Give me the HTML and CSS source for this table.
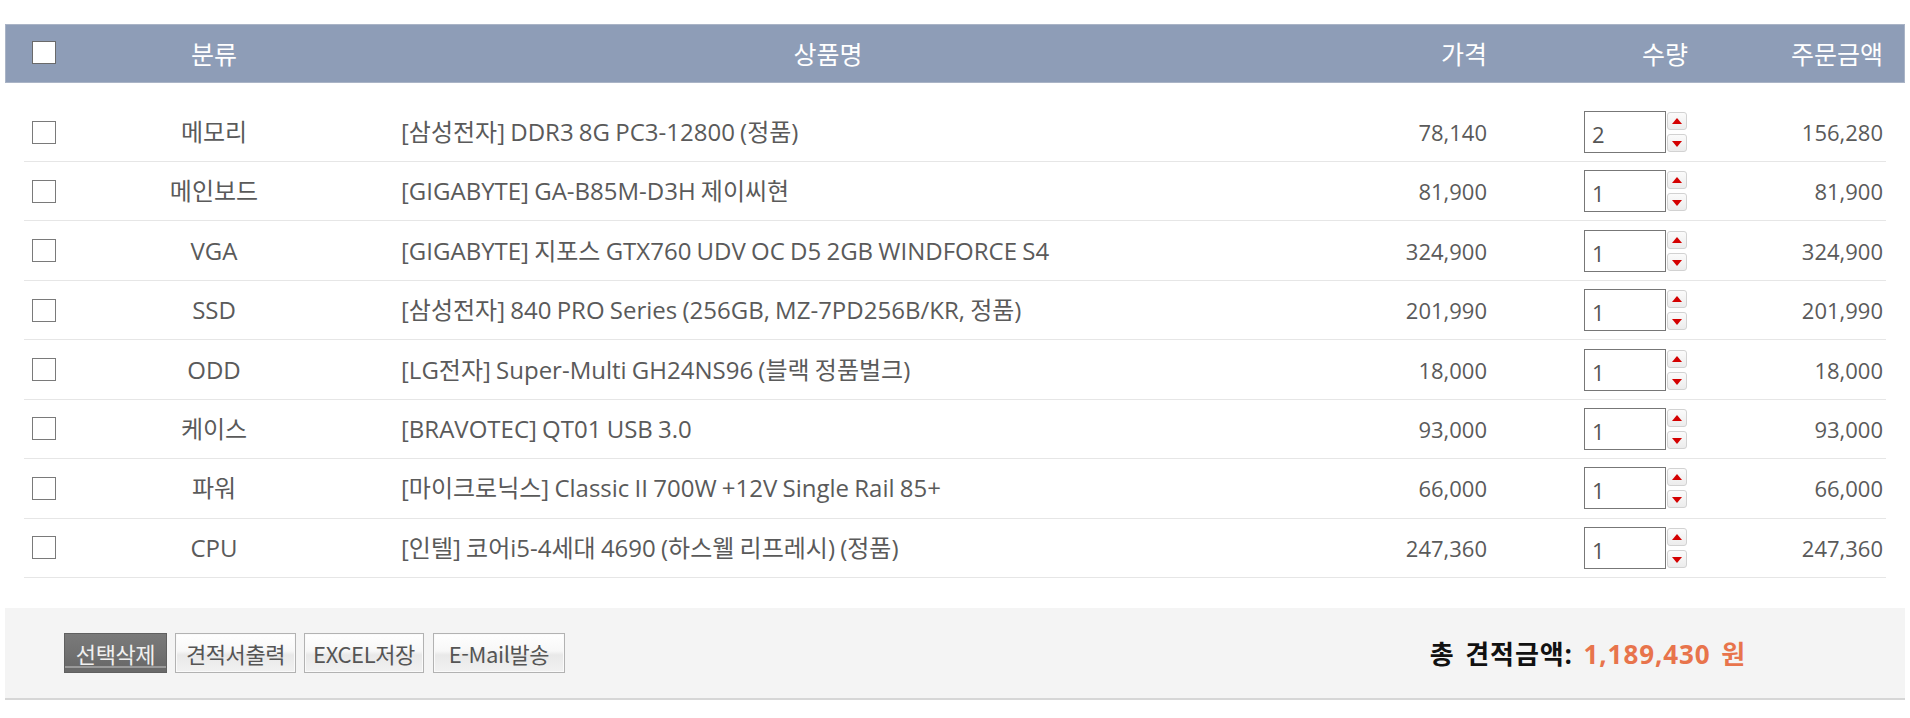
FILE: index.html
```html
<!DOCTYPE html>
<html lang="ko">
<head>
<meta charset="utf-8">
<title>견적</title>
<link rel="stylesheet" href="styles.css">
</head>
<body>
<div class="wrap">
  <div class="thead">
    <div class="grid">
      <div class="c-chk"><span class="chk chk-head"></span></div>
      <div class="c-cat">분류</div>
      <div class="c-name h-name">상품명</div>
      <div class="c-price">가격</div>
      <div class="c-qty h-qty">수량</div>
      <div class="c-sum">주문금액</div>
    </div>
  </div>

  <div class="tbody">
    <div class="grid row">
      <div class="c-chk"><span class="chk"></span></div>
      <div class="c-cat">메모리</div>
      <div class="c-name">[삼성전자] DDR3 8G PC3-12800 (정품)</div>
      <div class="c-price">78,140</div>
      <div class="c-qty"><span class="qbox">2</span><span class="spin"><span class="sbtn up"></span><span class="sbtn down"></span></span></div>
      <div class="c-sum">156,280</div>
    </div>
    <div class="grid row">
      <div class="c-chk"><span class="chk"></span></div>
      <div class="c-cat">메인보드</div>
      <div class="c-name">[GIGABYTE] GA-B85M-D3H 제이씨현</div>
      <div class="c-price">81,900</div>
      <div class="c-qty"><span class="qbox">1</span><span class="spin"><span class="sbtn up"></span><span class="sbtn down"></span></span></div>
      <div class="c-sum">81,900</div>
    </div>
    <div class="grid row">
      <div class="c-chk"><span class="chk"></span></div>
      <div class="c-cat">VGA</div>
      <div class="c-name">[GIGABYTE] 지포스 GTX760 UDV OC D5 2GB WINDFORCE S4</div>
      <div class="c-price">324,900</div>
      <div class="c-qty"><span class="qbox">1</span><span class="spin"><span class="sbtn up"></span><span class="sbtn down"></span></span></div>
      <div class="c-sum">324,900</div>
    </div>
    <div class="grid row">
      <div class="c-chk"><span class="chk"></span></div>
      <div class="c-cat">SSD</div>
      <div class="c-name">[삼성전자] 840 PRO Series (256GB, MZ-7PD256B/KR, 정품)</div>
      <div class="c-price">201,990</div>
      <div class="c-qty"><span class="qbox">1</span><span class="spin"><span class="sbtn up"></span><span class="sbtn down"></span></span></div>
      <div class="c-sum">201,990</div>
    </div>
    <div class="grid row">
      <div class="c-chk"><span class="chk"></span></div>
      <div class="c-cat">ODD</div>
      <div class="c-name">[LG전자] Super-Multi GH24NS96 (블랙 정품벌크)</div>
      <div class="c-price">18,000</div>
      <div class="c-qty"><span class="qbox">1</span><span class="spin"><span class="sbtn up"></span><span class="sbtn down"></span></span></div>
      <div class="c-sum">18,000</div>
    </div>
    <div class="grid row">
      <div class="c-chk"><span class="chk"></span></div>
      <div class="c-cat">케이스</div>
      <div class="c-name">[BRAVOTEC] QT01 USB 3.0</div>
      <div class="c-price">93,000</div>
      <div class="c-qty"><span class="qbox">1</span><span class="spin"><span class="sbtn up"></span><span class="sbtn down"></span></span></div>
      <div class="c-sum">93,000</div>
    </div>
    <div class="grid row">
      <div class="c-chk"><span class="chk"></span></div>
      <div class="c-cat">파워</div>
      <div class="c-name">[마이크로닉스] Classic II 700W +12V Single Rail 85+</div>
      <div class="c-price">66,000</div>
      <div class="c-qty"><span class="qbox">1</span><span class="spin"><span class="sbtn up"></span><span class="sbtn down"></span></span></div>
      <div class="c-sum">66,000</div>
    </div>
    <div class="grid row">
      <div class="c-chk"><span class="chk"></span></div>
      <div class="c-cat">CPU</div>
      <div class="c-name">[인텔] 코어i5-4세대 4690 (하스웰 리프레시) (정품)</div>
      <div class="c-price">247,360</div>
      <div class="c-qty"><span class="qbox">1</span><span class="spin"><span class="sbtn up"></span><span class="sbtn down"></span></span></div>
      <div class="c-sum">247,360</div>
    </div>
  </div>

  <div class="tfoot">
    <div class="btns">
      <span class="btn btn-dark">선택삭제</span>
      <span class="btn w2">견적서출력</span>
      <span class="btn w3">EXCEL저장</span>
      <span class="btn w4">E-Mail발송</span>
    </div>
    <div class="total">총 견적금액: <span class="amt">1,189,430 원</span></div>
  </div>
</div>
</body>
</html>
```

FILE: styles.css
```css
* { box-sizing: border-box; }
html, body { margin: 0; padding: 0; background: #fff; }
body {
  font-family: "Open Sans", "Noto Sans CJK KR", sans-serif;
  color: #5a5a5a;
  font-size: 24px;
}
.wrap {
  margin: 24px 5px 0 5px;
}
.grid {
  display: grid;
  grid-template-columns: 40px 300px 928px 195px 253px 146px;
  align-items: center;
}
.thead {
  height: 59px;
  background: #8e9db7;
  border: 1px solid #aab4c6;
  padding: 0 18px 2px;
  display: flex;
  align-items: center;
  color: #fff;
  font-size: 25px;
}
.thead .grid { width: 100%; }
.c-chk { display: flex; justify-content: center; }
.c-cat { text-align: center; }
.c-name { padding-left: 37px; white-space: nowrap; word-spacing: -1px; }
.h-name { padding-left: 0; text-align: center; }
.c-price { text-align: right; font-size: 22px; }
.c-qty { display: flex; align-items: center; padding-left: 97px; }
.h-qty { display: block; padding-left: 0; text-align: right; padding-right: 52px; }
.c-sum { text-align: right; padding-right: 3px; font-size: 22px; }
.thead .c-price, .thead .c-sum { font-size: 25px; }

.chk {
  display: block;
  width: 24px;
  height: 23px;
  border: 1px solid #7a7a7a;
  background: #fff;
}
.chk-head { border-color: #6a6a6a; }

.tbody {
  margin-top: 20px;
  padding: 0 19px;
}
.row {
  height: 59.45px;
  border-bottom: 1px solid #e6e6e6;
  line-height: 1;
}
.row:first-child { height: 59px; }

.qbox {
  display: flex;
  align-items: center;
  width: 82px;
  height: 42px;
  border: 1px solid #777;
  padding-left: 7px;
  padding-top: 4px;
  font-size: 22px;
  color: #555;
  background: #fff;
}
.spin {
  display: flex;
  flex-direction: column;
  gap: 4px;
  margin-left: 1px;
}
.sbtn {
  position: relative;
  display: block;
  width: 20px;
  height: 18px;
  border: 1px solid #d2d2d2;
  border-radius: 3px;
  background: linear-gradient(#fbfbfb, #ececec);
}
.sbtn::after {
  content: "";
  position: absolute;
  left: 4px;
  width: 0;
  height: 0;
  border-left: 5px solid transparent;
  border-right: 5px solid transparent;
}
.sbtn.up::after { top: 5px; border-bottom: 6px solid #d40000; }
.sbtn.down::after { top: 6px; border-top: 6px solid #d40000; }

.tfoot {
  margin-top: 30px;
  height: 92px;
  background: #f4f4f4;
  border-bottom: 2px solid #d6d6d6;
  display: flex;
  align-items: center;
  justify-content: space-between;
  padding: 0 159px 0 59px;
}
.btns { display: flex; gap: 8px; }
.btn {
  display: flex;
  align-items: center;
  justify-content: center;
  height: 40px;
  width: 121px;
  border: 1px solid #b2b2b2;
  background: linear-gradient(#ffffff 0%, #f7f7f7 45%, #e9e9e9 55%, #f1f1f1 100%);
  color: #555;
  font-family: "Noto Sans CJK KR", sans-serif;
  font-size: 22px;
  letter-spacing: -0.4px;
  box-shadow: inset 0 0 0 1px #fafafa;
}
.btn-dark {
  width: 103px;
  background: linear-gradient(#7a7a7a 0%, #707070 55%, #666 100%);
  border-color: #606060;
  color: #f0f0f0;
  box-shadow: inset 0 -4px 0 #6a6a6a, inset 0 -6px 0 #9a9a9a;
}
.w2 { width: 121px; }
.w3 { width: 120px; }
.w4 { width: 132px; margin-left: 1px; }

.total {
  font-family: "Open Sans", "Noto Sans CJK KR", sans-serif;
  font-size: 26px;
  font-weight: bold;
  color: #111;
  letter-spacing: 0.9px;
  word-spacing: 3px;
}
.amt { color: #e8744c; }
```
